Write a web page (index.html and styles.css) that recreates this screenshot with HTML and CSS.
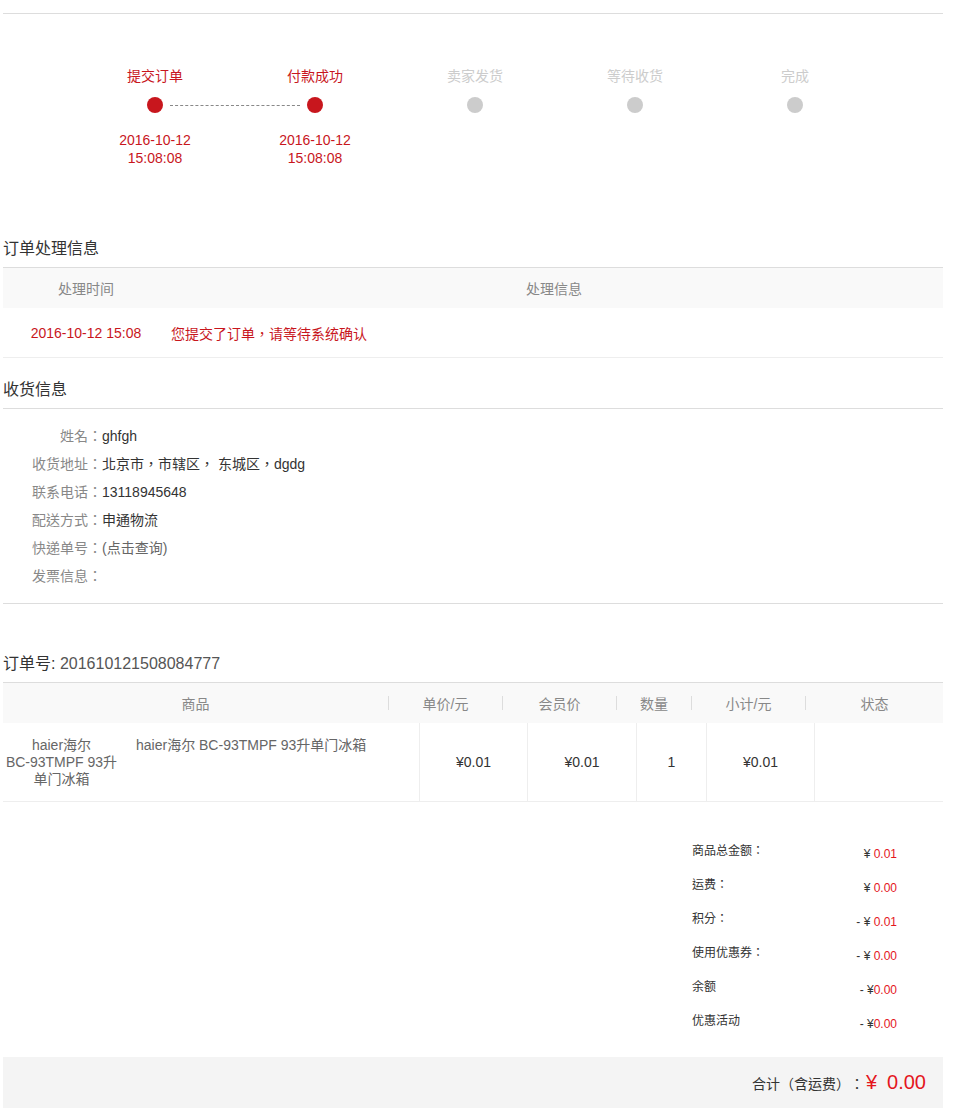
FILE: index.html
```html
<!DOCTYPE html>
<html lang="zh-CN">
<head>
<meta charset="utf-8">
<title>订单详情</title>
<link rel="stylesheet" href="styles.css">
</head>
<body>
<div class="page">
  <div class="top-line"></div>

  <ul class="steps">
    <li class="step done linked">
      <div class="step-label">提交订单</div>
      <div class="step-dot"></div>
      <div class="step-time">2016-10-12<br>15:08:08</div>
    </li>
    <li class="step done">
      <div class="step-label">付款成功</div>
      <div class="step-dot"></div>
      <div class="step-time">2016-10-12<br>15:08:08</div>
    </li>
    <li class="step">
      <div class="step-label">卖家发货</div>
      <div class="step-dot"></div>
    </li>
    <li class="step">
      <div class="step-label">等待收货</div>
      <div class="step-dot"></div>
    </li>
    <li class="step">
      <div class="step-label">完成</div>
      <div class="step-dot"></div>
    </li>
  </ul>

  <h3 class="sec-title sec-process">订单处理信息</h3>
  <div class="proc-head">
    <div class="proc-c1">处理时间</div>
    <div class="proc-c2">处理信息</div>
  </div>
  <div class="proc-row">
    <div class="proc-c1">2016-10-12 15:08</div>
    <div class="proc-c2 left">您提交了订单，请等待系统确认</div>
  </div>

  <h3 class="sec-title sec-recv">收货信息</h3>
  <div class="recv">
    <div class="recv-row"><span class="recv-k">姓名：</span><span class="recv-v">ghfgh</span></div>
    <div class="recv-row"><span class="recv-k">收货地址：</span><span class="recv-v">北京市，市辖区， 东城区，dgdg</span></div>
    <div class="recv-row"><span class="recv-k">联系电话：</span><span class="recv-v">13118945648</span></div>
    <div class="recv-row"><span class="recv-k">配送方式：</span><span class="recv-v">申通物流</span></div>
    <div class="recv-row"><span class="recv-k">快递单号：</span><span class="recv-v gray">(点击查询)</span></div>
    <div class="recv-row"><span class="recv-k">发票信息：</span><span class="recv-v"></span></div>
  </div>

  <h3 class="sec-title sec-order">订单号: <span class="order-no">201610121508084777</span></h3>
  <div class="tbl-head">
    <div class="th th-goods">商品</div>
    <span class="th-sep"></span>
    <div class="th th-price">单价/元</div>
    <span class="th-sep"></span>
    <div class="th th-member">会员价</div>
    <span class="th-sep"></span>
    <div class="th th-qty">数量</div>
    <span class="th-sep"></span>
    <div class="th th-sub">小计/元</div>
    <span class="th-sep"></span>
    <div class="th th-status">状态</div>
  </div>
  <div class="tbl-row">
    <div class="td td-goods">
      <div class="goods-img">haier海尔<br>BC-93TMPF 93升<br>单门冰箱</div>
      <div class="goods-name">haier海尔 BC-93TMPF 93升单门冰箱</div>
    </div>
    <div class="td td-price">¥0.01</div>
    <div class="td td-member">¥0.01</div>
    <div class="td td-qty">1</div>
    <div class="td td-sub">¥0.01</div>
    <div class="td td-status"></div>
  </div>

  <div class="summary">
    <div class="sum-row"><span class="sum-k">商品总金额：</span><span class="sum-v">¥ <em>0.01</em></span></div>
    <div class="sum-row"><span class="sum-k">运费：</span><span class="sum-v">¥ <em>0.00</em></span></div>
    <div class="sum-row"><span class="sum-k">积分：</span><span class="sum-v">- ¥ <em>0.01</em></span></div>
    <div class="sum-row"><span class="sum-k">使用优惠券：</span><span class="sum-v">- ¥ <em>0.00</em></span></div>
    <div class="sum-row"><span class="sum-k">余额</span><span class="sum-v">- ¥<em>0.00</em></span></div>
    <div class="sum-row"><span class="sum-k">优惠活动</span><span class="sum-v">- ¥<em>0.00</em></span></div>
  </div>

  <div class="total">
    <span class="total-k">合计（含运费）：</span><span class="total-v">¥<span class="total-num">0.00</span></span>
  </div>
</div>
</body>
</html>
```

FILE: styles.css
```css
* { box-sizing: border-box; }
html, body { margin: 0; padding: 0; background: #fff; }
body {
  font-family: "Liberation Sans", Arial, "Noto Sans CJK TC", "Noto Sans CJK SC", sans-serif;
  font-feature-settings: "locl" 0;
  text-spacing-trim: space-all;
  color: #333;
  font-size: 14px;
}
.page {
  width: 940px;
  margin-left: 3px;
  padding-bottom: 3px;
}
.top-line {
  margin-top: 13px;
  border-top: 1px solid #ddd;
}

/* steps */
.steps {
  list-style: none;
  margin: 0;
  padding: 53px 0 0 72px;
  display: flex;
}
.step {
  width: 160px;
  text-align: center;
  position: relative;
}
.step-label {
  font-size: 14px;
  line-height: 18px;
  color: #ccc;
}
.step-dot {
  width: 16px;
  height: 16px;
  border-radius: 50%;
  background: #ccc;
  margin: 12px auto 0;
}
.step-time {
  margin-top: 18px;
  font-size: 14px;
  line-height: 18px;
  color: #c8161d;
}
.step.done .step-label { color: #c8161d; }
.step.done .step-dot { background: #c8161d; }
.step.linked::after {
  content: "";
  position: absolute;
  left: 95px;
  top: 38px;
  width: 130px;
  border-top: 1px dashed #888;
}

/* section titles */
.sec-title {
  margin: 0;
  font-weight: normal;
  font-size: 16px;
  line-height: 20px;
  color: #333;
  padding-bottom: 8px;
  border-bottom: 1px solid #ddd;
}
.sec-process { margin-top: 72px; }
.sec-recv { margin-top: 22px; }
.sec-order { margin-top: 50px; border-bottom: none; padding-bottom: 8px; }
.order-no { color: #555; }

/* process table */
.proc-head {
  display: flex;
  height: 40px;
  align-items: center;
  background: #f9f9f9;
  color: #888;
  font-size: 14px;
}
.proc-c1 { width: 166px; text-align: center; }
.proc-c2 { flex: 1; text-align: center; padding-right: 4px; }
.proc-c2.left { text-align: left; padding-left: 2px; }
.proc-row {
  display: flex;
  height: 50px;
  align-items: center;
  color: #c8161d;
  font-size: 14px;
  border-bottom: 1px solid #eee;
}

/* receiving info */
.recv {
  padding: 13px 0 13px;
  border-bottom: 1px solid #ddd;
}
.recv-row {
  display: flex;
  line-height: 28px;
  font-size: 14px;
}
.recv-k {
  width: 99px;
  text-align: right;
  color: #888;
}
.recv-v { color: #333; }
.recv-v.gray { color: #666; }

/* goods table */
.tbl-head {
  display: flex;
  align-items: center;
  height: 41px;
  border-top: 1px solid #ddd;
  background: #f9f9f9;
  color: #888;
  font-size: 14px;
}
.th { text-align: center; }
.th-sep {
  width: 1px;
  height: 14px;
  background: #ddd;
}
.th-goods { width: 385px; }
.th-price { width: 113px; }
.th-member { width: 113px; }
.th-qty { width: 74px; }
.th-sub { width: 113px; }
.th-status { flex: 1; }

.tbl-row {
  display: flex;
  height: 79px;
  border-bottom: 1px solid #eee;
  font-size: 14px;
  color: #333;
}
.td {
  display: flex;
  align-items: center;
  justify-content: center;
}
.td + .td { border-left: 1px solid #eee; }
.td-goods {
  width: 416px;
  align-items: flex-start;
  justify-content: flex-start;
  padding-top: 14px;
  color: #666;
}
.goods-img {
  width: 117px;
  text-align: center;
  line-height: 17px;
}
.goods-name {
  margin-left: 16px;
  line-height: 17px;
}
.td-price { width: 108px; }
.td-member { width: 109px; }
.td-qty { width: 70px; }
.td-sub { width: 108px; }
.td-status { flex: 1; }

/* summary */
.summary {
  width: 205px;
  margin: 32px 46px 0 auto;
  font-size: 12px;
}
.sum-row {
  display: flex;
  justify-content: space-between;
  height: 34px;
  line-height: 34px;
}
.sum-k { color: #333; }
.sum-v { color: #333; padding-top: 3px; }
.sum-v em { font-style: normal; color: #e4161d; }

/* total */
.total {
  margin-top: 19px;
  height: 51px;
  background: #f4f4f4;
  display: flex;
  align-items: center;
  justify-content: flex-end;
  padding-right: 17px;
}
.total-k { font-size: 14px; color: #333; }
.total-v { font-size: 20px; color: #e4161d; margin-left: 2px; }
.total-num { margin-left: 10px; }
```
